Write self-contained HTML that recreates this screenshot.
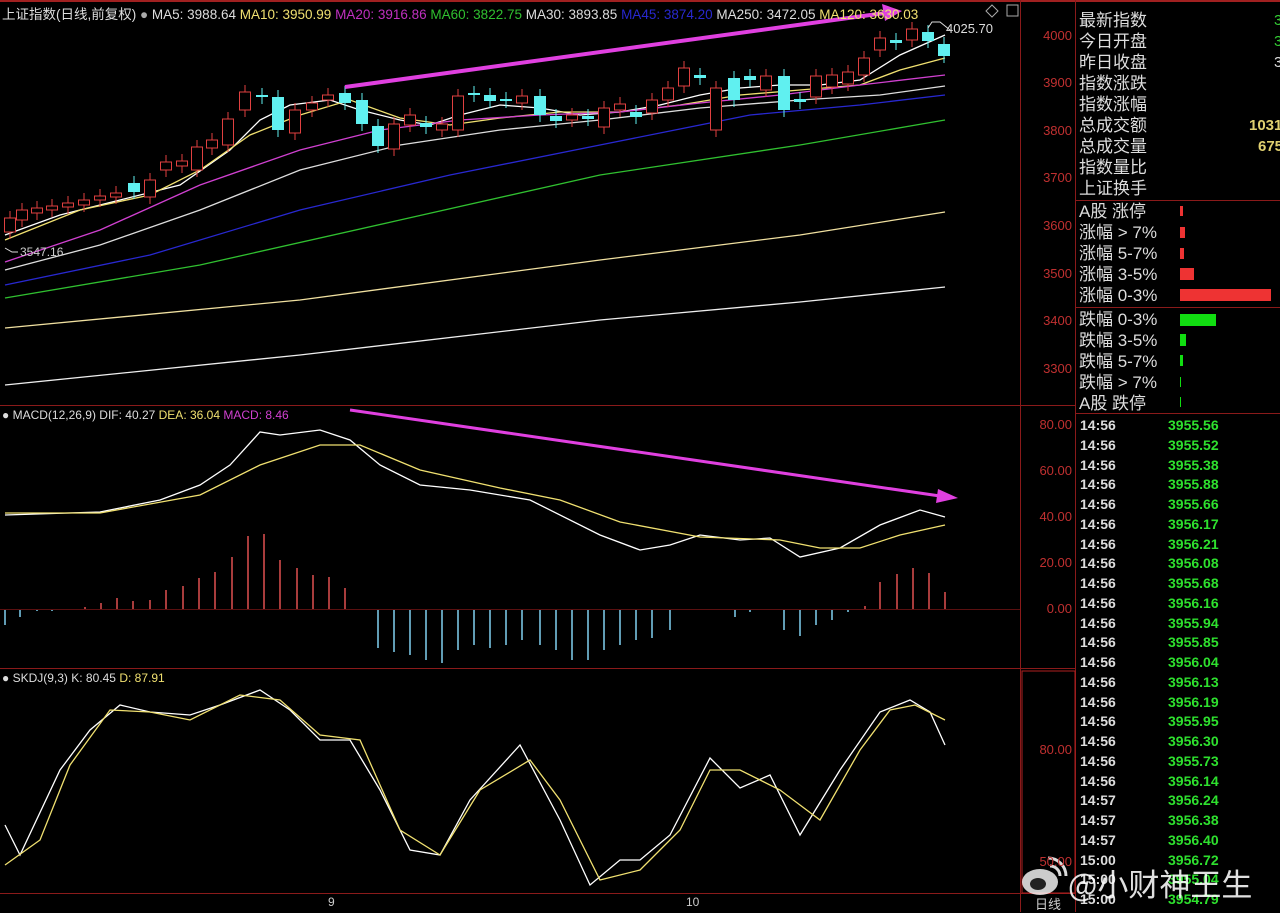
<!DOCTYPE html>
<html><head><meta charset="utf-8"><style>
*{margin:0;padding:0}
body{width:1280px;height:912px;background:#000;overflow:hidden;position:relative;font-family:"Liberation Sans","Noto Sans CJK SC",sans-serif}
svg{position:absolute;left:0;top:0}
.t{position:absolute;white-space:nowrap}
.rp{position:absolute;left:1079px;color:#ddd;font-size:17px;line-height:21px}
.tm{position:absolute;left:1080px;color:#ddd;font-size:14px;font-weight:bold;font-family:"Liberation Sans",sans-serif}
.tv{position:absolute;left:1168px;color:#2ee02e;font-size:14px;font-weight:bold}
</style></head><body>
<svg id="s" width="1280" height="912" xmlns="http://www.w3.org/2000/svg">
<g stroke="#8a1a1a" stroke-width="1" fill="none">
<line x1="0" y1="1" x2="1280" y2="1" stroke="#a02020" stroke-width="2"/>
<line x1="1020.5" y1="0" x2="1020.5" y2="912"/>
<line x1="1075.5" y1="0" x2="1075.5" y2="912"/>
<line x1="0" y1="405.5" x2="1075" y2="405.5"/>
<line x1="0" y1="668.5" x2="1075" y2="668.5"/>
<line x1="0" y1="893.5" x2="1075" y2="893.5"/>
<line x1="1075" y1="200.5" x2="1280" y2="200.5"/>
<line x1="1075" y1="307.5" x2="1280" y2="307.5"/>
<line x1="1075" y1="413.5" x2="1280" y2="413.5"/>
<rect x="1022" y="671" width="53" height="222" stroke="#b02020"/>
<line x1="0" y1="609.5" x2="1020" y2="609.5" stroke="#5a1010"/>
</g>
<g fill="none" stroke-width="1.3">
<polyline stroke="#fff" points="5,235 60,215 120,200 180,185 230,150 260,120 290,105 330,100 360,110 400,120 430,125 460,115 500,105 540,108 580,115 620,112 660,105 700,95 740,88 780,85 820,85 860,80 900,55 945,35"/>
<polyline stroke="#f0e070" points="5,240 80,210 150,195 200,170 250,135 300,115 350,100 400,118 450,125 500,118 560,112 620,112 680,105 740,95 800,90 860,85 900,70 945,58"/>
<polyline stroke="#d040d0" points="5,262 100,230 200,185 300,150 380,130 460,120 540,115 620,112 700,103 780,95 860,85 945,75"/>
<polyline stroke="#ddd" points="5,270 100,245 200,210 300,170 400,145 500,130 600,120 700,108 800,100 880,95 945,86"/>
<polyline stroke="#2828d0" points="5,285 150,255 300,210 450,175 600,145 750,115 860,105 945,95"/>
<polyline stroke="#30c030" points="5,298 200,265 400,220 600,175 800,145 945,120"/>
<polyline stroke="#f0e0a0" points="5,328 300,300 600,260 800,235 945,212"/>
<polyline stroke="#eee" points="5,385 300,355 600,320 800,302 945,287"/>
<polyline stroke="#fff" points="5,515 100,512 160,500 200,485 230,465 260,432 280,435 320,430 350,440 380,465 420,485 470,490 530,500 600,535 640,550 670,545 700,535 740,540 770,538 800,557 840,548 880,525 920,510 945,517"/>
<polyline stroke="#f0e070" points="5,513 100,513 200,495 260,465 320,445 360,445 420,470 500,488 560,500 620,522 700,537 780,540 820,548 860,548 900,535 945,525"/>
<polyline stroke="#fff" points="5,825 20,855 60,770 90,730 120,705 150,712 190,715 220,705 260,690 290,710 320,740 350,740 380,790 410,850 440,855 470,800 520,745 560,820 590,885 620,860 640,860 670,835 710,758 740,788 770,775 800,835 840,770 880,712 910,700 930,712 945,745"/>
<polyline stroke="#f0e070" points="5,865 40,840 70,765 110,710 150,712 190,720 240,695 280,700 320,735 360,740 400,830 440,855 480,790 530,760 560,800 600,880 640,870 680,830 710,770 740,770 780,790 820,820 860,750 890,710 915,705 945,720"/>
</g>
<g id="c"></g>
<g stroke="#e040e0" stroke-width="4" fill="#e040e0">
<line x1="345" y1="87" x2="885" y2="13"/><polygon points="902,11 882,4 885,21" stroke="none"/>
<line x1="350" y1="410" x2="940" y2="496" stroke-width="3"/><polygon points="958,498 938,489 936,503" stroke="none"/>
</g>
<polyline points="928,28 932,22 940,22 950,30" stroke="#ddd" fill="none"/>
<polyline points="5,248 12,252 18,252" stroke="#ddd" fill="none"/>
<polygon points="992,5 998,11 992,17 986,11" stroke="#aaa" fill="none"/>
<rect x="1007" y="5" width="11" height="11" stroke="#aaa" fill="none"/>
<g fill="none" stroke="rgba(255,255,255,0.85)" stroke-width="3">
<ellipse cx="1040" cy="882" rx="18" ry="13" fill="rgba(255,255,255,0.8)" stroke="none"/>
<ellipse cx="1038" cy="884" rx="8" ry="6" fill="#222" stroke="none"/>
<path d="M1050,866 a10,10 0 0 1 10,10"/>
<path d="M1048,858 a18,18 0 0 1 18,18"/>
</g>
</svg>
<div class="t" style="left:2px;top:3px;font-size:13.5px;color:#ddd">上证指数(日线,前复权) <span style="color:#aaa">●</span> MA5: 3988.64 <span style="color:#f0e070">MA10: 3950.99</span> <span style="color:#c030c0">MA20: 3916.86</span> <span style="color:#30c030">MA60: 3822.75</span> MA30: 3893.85 <span style="color:#2828d0">MA45: 3874.20</span> MA250: 3472.05 <span style="color:#f0e070">MA120: 3630.03</span></div>
<div class="t" style="left:946px;top:21px;font-size:13px;color:#ddd">4025.70</div>
<div class="t" style="left:20px;top:245px;font-size:12px;color:#ccc">3547.16</div>
<div class="t" style="left:2px;top:408px;font-size:12px;color:#ddd">● MACD(12,26,9) DIF: 40.27 <span style="color:#f0e070">DEA: 36.04</span> <span style="color:#d040d0">MACD: 8.46</span></div>
<div class="t" style="left:2px;top:671px;font-size:12px;color:#ddd">● SKDJ(9,3) K: 80.45 <span style="color:#f0e070">D: 87.91</span></div>
<div id="ax" style="position:absolute;left:1020px;top:0;width:52px;color:#c03030;font-size:13px;text-align:right"></div>
<div class="t" style="left:328px;top:895px;font-size:12px;color:#ccc">9</div>
<div class="t" style="left:686px;top:895px;font-size:12px;color:#ccc">10</div>
<div class="t" style="left:1035px;top:894px;font-size:13px;color:#ccc">日线</div>
<div class="rp" style="top:10px">最新指数<br>今日开盘<br>昨日收盘<br>指数涨跌<br>指数涨幅<br>总成交额<br>总成交量<br>指数量比<br>上证换手</div>
<div class="t" style="left:1274px;top:10px;color:#3c3;font-size:15px;line-height:21px">3<br>3<br><span style="color:#ddd">3</span></div>
<div class="t" style="left:1249px;top:115px;color:#e0d070;font-size:15px;line-height:21px;font-weight:bold">1031<br><span style="padding-left:9px">675</span></div>
<div class="rp" style="top:201px">A股 涨停<br>涨幅 &gt; 7%<br>涨幅 5-7%<br>涨幅 3-5%<br>涨幅 0-3%</div>
<div class="rp" style="top:309px">跌幅 0-3%<br>跌幅 3-5%<br>跌幅 5-7%<br>跌幅 &gt; 7%<br>A股 跌停</div>
<div style="position:absolute;left:1180px;top:206px;width:3px;height:10px;background:#e33"></div>
<div style="position:absolute;left:1180px;top:227px;width:5px;height:11px;background:#e33"></div>
<div style="position:absolute;left:1180px;top:248px;width:4px;height:11px;background:#e33"></div>
<div style="position:absolute;left:1180px;top:268px;width:14px;height:12px;background:#e33"></div>
<div style="position:absolute;left:1180px;top:289px;width:91px;height:12px;background:#e33"></div>
<div style="position:absolute;left:1180px;top:314px;width:36px;height:12px;background:#1d1"></div>
<div style="position:absolute;left:1180px;top:334px;width:6px;height:12px;background:#1d1"></div>
<div style="position:absolute;left:1180px;top:355px;width:3px;height:11px;background:#1d1"></div>
<div style="position:absolute;left:1180px;top:377px;width:1px;height:10px;background:#1d1"></div>
<div style="position:absolute;left:1180px;top:397px;width:1px;height:10px;background:#1d1"></div>
<div id="tl"></div>
<div class="t" style="left:1068px;top:860px;font-size:31px;color:rgba(255,255,255,0.88);font-family:'Noto Sans CJK SC','Liberation Sans',sans-serif">@小财神王生</div>
<script>
var c=[[10,218,232,'r'],[22,210,220,'r'],[37,208,213,'r'],[52,206,210,'r'],[68,203,207,'r'],[84,200,205,'r'],[100,196,200,'r'],[116,193,197,'r'],[134,183,192,'c'],[150,180,197,'r'],[166,162,170,'r'],[182,161,166,'r'],[197,147,170,'r'],[212,140,148,'r'],[228,119,145,'r'],[245,92,110,'r'],[262,95,97,'c'],[278,97,130,'c'],[295,110,133,'r'],[312,103,110,'r'],[328,95,100,'r'],[345,93,103,'c'],[362,100,124,'c'],[378,126,146,'c'],[394,124,149,'r'],[410,115,125,'r'],[426,123,127,'c'],[442,124,130,'r'],[458,96,130,'r'],[474,93,95,'c'],[490,95,101,'c'],[506,99,101,'c'],[522,96,103,'r'],[540,96,115,'c'],[556,116,121,'c'],[572,115,120,'r'],[588,116,119,'c'],[604,108,127,'r'],[620,104,110,'r'],[636,112,117,'c'],[652,100,113,'r'],[668,88,100,'r'],[684,68,86,'r'],[700,75,78,'c'],[716,88,130,'r'],[734,78,100,'c'],[750,76,80,'c'],[766,76,90,'r'],[784,76,110,'c'],[800,99,102,'c'],[816,76,97,'r'],[832,75,87,'r'],[848,72,84,'r'],[864,58,75,'r'],[880,38,50,'r'],[896,40,43,'c'],[912,29,40,'r'],[928,32,41,'c'],[944,44,56,'c']];
var h='';c.forEach(function(a){var col=a[3]=='r'?'#e04040':'#60f0f0';h+='<line x1="'+a[0]+'" y1="'+(a[1]-7)+'" x2="'+a[0]+'" y2="'+(a[2]+7)+'" stroke="'+col+'"/>';h+=a[3]=='r'?'<rect x="'+(a[0]-5.5)+'" y="'+a[1]+'" width="11" height="'+(a[2]-a[1])+'" fill="#000" stroke="'+col+'"/>':'<rect x="'+(a[0]-6)+'" y="'+a[1]+'" width="12" height="'+Math.max(2,a[2]-a[1])+'" fill="'+col+'"/>';});
var r=[[85,607],[101,603],[117,598],[133,601],[150,600],[166,590],[183,586],[199,578],[215,572],[232,557],[248,536],[264,534],[280,560],[297,568],[313,575],[329,577],[345,588],[865,606],[880,582],[897,574],[913,568],[929,573],[945,592]];
r.forEach(function(a){h+='<line x1="'+a[0]+'" y1="609" x2="'+a[0]+'" y2="'+a[1]+'" stroke="#e05050" stroke-width="1.5"/>';});
var b=[[5,625],[20,617],[37,611],[52,611],[378,648],[394,652],[410,655],[426,660],[442,663],[458,650],[474,645],[490,648],[506,645],[522,640],[540,645],[556,650],[572,660],[588,660],[604,650],[620,645],[636,640],[652,638],[670,630],[735,617],[750,612],[784,630],[800,636],[816,625],[832,620],[848,612]];
b.forEach(function(a){h+='<line x1="'+a[0]+'" y1="610" x2="'+a[0]+'" y2="'+a[1]+'" stroke="#80d0f0" stroke-width="1.5"/>';});
document.getElementById('c').innerHTML=h;
var ax='',L=[['4000',36],['3900',83],['3800',131],['3700',178],['3600',226],['3500',274],['3400',321],['3300',369],['80.00',425],['60.00',471],['40.00',517],['20.00',563],['0.00',609],['80.00',750],['50.00',862]];
L.forEach(function(a){ax+='<div style="position:absolute;right:0;top:'+(a[1]-8)+'px">'+a[0]+'</div>';});
document.getElementById('ax').innerHTML=ax;
var v=['3955.56','3955.52','3955.38','3955.88','3955.66','3956.17','3956.21','3956.08','3955.68','3956.16','3955.94','3955.85','3956.04','3956.13','3956.19','3955.95','3956.30','3955.73','3956.14','3956.24','3956.38','3956.40','3956.72','3955.04','3954.79'];
var t='';v.forEach(function(x,i){var y=417+i*19.75;var tm=i<19?'14:56':(i<22?'14:57':'15:00');t+='<div class="tm" style="top:'+y+'px">'+tm+'</div><div class="tv" style="top:'+y+'px">'+x+'</div>';});
document.getElementById('tl').innerHTML=t;
</script>
</body></html>
